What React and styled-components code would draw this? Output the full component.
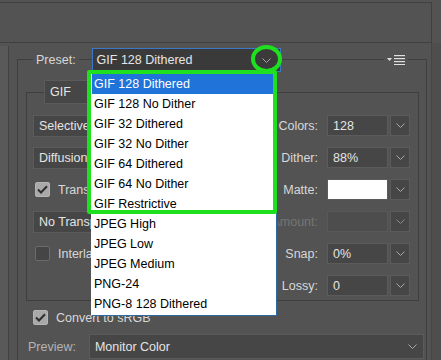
import React from "react";
import styled, { createGlobalStyle } from "styled-components";

const Global = createGlobalStyle`
  html, body { margin: 0; padding: 0; }
  body {
    width: 441px; height: 360px; overflow: hidden;
    background: #535353;
    font-family: "Liberation Sans", Arial, sans-serif;
    font-size: 12.5px;
    color: #dcdcdc;
  }
`;

const Page = styled.div`
  position: relative;
  width: 441px;
  height: 360px;
  overflow: hidden;
  background: #535353;
`;

const TopBox = styled.div`
  margin-top: 2px;
  margin-left: -1px;
  width: 431px;
  height: 39px;
  border: 1px solid #404040;
`;

const Main = styled.div`
  display: flex;
  height: 320px;
`;

const LeftStrip = styled.div`
  width: 8px;
  margin-top: 3px;
  background: #595959;
  border-right: 1px solid #424242;
`;

const RightStrip = styled.div`
  width: 9px;
  margin-left: 4px;
  border-left: 1px solid #454545;
  background: #4e4e4e;
`;

const Panel = styled.div`
  flex: 1;
  padding-left: 8px;
  padding-top: 16px;
`;

const Group = styled.div`
  border: 1px solid #3f3f3f;
  border-bottom: none;
  height: 320px;
`;

const Header = styled.div`
  display: flex;
  align-items: center;
  height: 24px;
  margin-top: -12px;
  padding-left: 15px;
  padding-right: 18px;
`;

const Label = styled.span`
  background: #535353;
  padding: 0 3px;
  color: ${(p) => (p.$dim ? "#b4b4b4" : "#d8d8d8")};
  white-space: nowrap;
`;

const PresetSelect = styled.div`
  margin-left: 13px;
  width: 183px;
  height: 22px;
  background: #3a3a3a;
  border: 1px solid #3b78c8;
  display: flex;
  align-items: center;
  padding-left: 4px;
  color: #e6e6e6;
`;

const Spacer = styled.div`flex: 1;`;

const MenuIcon = styled.div`
  background: #535353;
  padding: 0 3px;
  display: flex;
  align-items: center;
`;

const Inner = styled.div`
  margin: 20px 7px 0 8px;
  border: 1px solid #3f3f3f;
  padding: 0 8px 4px 6px;
`;

const InnerHeader = styled.div`
  margin-top: -13px;
  padding-left: 11px;
  display: flex;
`;

const Box = styled.div`
  height: ${(p) => p.$h || 22}px;
  width: ${(p) => p.$w}px;
  flex-shrink: 0;
  box-sizing: border-box;
  background: ${(p) => (p.$white ? "#ffffff" : p.$disabled ? "#4d4d4d" : "#464646")};
  border: 1px solid ${(p) => (p.$disabled ? "#585858" : "#5b5b5b")};
  display: flex;
  align-items: center;
  padding-left: 5px;
  color: #e4e4e4;
  white-space: nowrap;
  overflow: hidden;
`;

const Rows = styled.div`
  margin-top: 11px;
  display: flex;
  flex-direction: column;
  gap: 11px;
`;

const Row = styled.div`
  display: flex;
  align-items: center;
  height: 21px;
`;

/* left column ends where the open preset list begins */
const LeftCell = styled.div`
  width: 58px;
  height: 22px;
  display: flex;
  align-items: center;
  white-space: nowrap;
  overflow: hidden;
  color: #d8d8d8;
`;

const RightCell = styled.div`
  flex: 1;
  display: flex;
  align-items: center;
  justify-content: flex-end;
  gap: 2px;
`;

const RLabelClip = styled.div`
  width: ${(p) => p.$w || 40}px;
  margin-right: 7px;
  overflow: hidden;
  display: flex;
  justify-content: flex-end;
`;

const RLabel = styled.span`
  flex-shrink: 0;
  color: ${(p) => (p.$disabled ? "#757575" : "#d8d8d8")};
  white-space: nowrap;
`;

const ChevBox = styled.div`
  width: 20px;
  height: 21px;
  box-sizing: border-box;
  background: #464646;
  border: 1px solid #5b5b5b;
  display: flex;
  align-items: center;
  justify-content: center;
`;

const Check = styled.div`
  width: 15px;
  height: 15px;
  flex-shrink: 0;
  margin-left: 2px;
  box-sizing: border-box;
  border-radius: 2px;
  background: ${(p) => (p.$on ? "#a9a9a9" : "#454545")};
  border: 1px solid ${(p) => (p.$on ? "#b5b5b5" : "#6b6b6b")};
  display: flex;
  align-items: center;
  justify-content: center;
  margin-right: 8px;
`;

const CheckRow = styled.div`
  display: flex;
  align-items: center;
  height: 17px;
  margin-top: 8px;
  padding-left: 13px;
  color: #d8d8d8;
`;

const PreviewRow = styled.div`
  display: flex;
  align-items: center;
  margin-top: 8px;
  padding-left: 7px;
  gap: 10px;
`;

const PreviewSelect = styled.div`
  width: 335px;
  height: 25px;
  box-sizing: border-box;
  background: #464646;
  border: 1px solid #5b5b5b;
  display: flex;
  align-items: center;
  padding: 0 6px 0 5px;
  color: #e4e4e4;
  justify-content: space-between;
`;

const List = styled.div`
  position: absolute;
  left: 91px;
  top: 72px;
  width: 186px;
  box-sizing: border-box;
  background: #ffffff;
  border: 1px solid #2c6aa0;
  border-left-color: #ffffff;
  padding: 1px 0;
`;

const Item = styled.div`
  height: 20px;
  line-height: 20px;
  padding-left: 2px;
  color: ${(p) => (p.$active ? "#ffffff" : "#000000")};
  background: ${(p) => (p.$active ? "#2073d8" : "transparent")};
  white-space: nowrap;
`;

const GreenRect = styled.div`
  position: absolute;
  left: 87px;
  top: 70px;
  width: 190px;
  height: 144px;
  box-sizing: border-box;
  border: 4px solid #1fe01f;
  border-radius: 2px;
`;

const GreenCircle = styled.div`
  position: absolute;
  left: 251px;
  top: 45px;
  width: 31px;
  height: 28px;
  box-sizing: border-box;
  border: 4px solid #1fe01f;
  border-radius: 50%;
  display: flex;
  align-items: center;
  justify-content: center;
  padding-top: 3px;
`;

const Chevron = ({ color = "#a8a8a8" }) => (
  <svg width="9" height="5" viewBox="0 0 9 5">
    <path d="M0.5 0.5 L4.5 4.5 L8.5 0.5" fill="none" stroke={color} strokeWidth="1" />
  </svg>
);

const Tick = () => (
  <svg width="11" height="9" viewBox="0 0 11 9">
    <path d="M1 4.5 L4 7.5 L10 1.2" fill="none" stroke="#2e2e2e" strokeWidth="2" />
  </svg>
);

const Menu = () => (
  <svg width="18" height="10" viewBox="0 0 18 10">
    <path d="M0 3 L5 3 L2.5 6 Z" fill="#e0e0e0" />
    <rect x="7" y="0" width="11" height="1.2" fill="#e0e0e0" />
    <rect x="7" y="3" width="11" height="1.2" fill="#e0e0e0" />
    <rect x="7" y="6" width="11" height="1.2" fill="#e0e0e0" />
    <rect x="7" y="9" width="11" height="1" fill="#e0e0e0" />
  </svg>
);

const presets = [
  "GIF 128 Dithered",
  "GIF 128 No Dither",
  "GIF 32 Dithered",
  "GIF 32 No Dither",
  "GIF 64 Dithered",
  "GIF 64 No Dither",
  "GIF Restrictive",
  "JPEG High",
  "JPEG Low",
  "JPEG Medium",
  "PNG-24",
  "PNG-8 128 Dithered",
];

const RightSel = ({ label, value, white, disabled, clip }) => (
  <RightCell>
    <RLabelClip $w={clip}><RLabel $disabled={disabled}>{label}</RLabel></RLabelClip>
    <Box $w={61} $h={21} $white={white} $disabled={disabled}>{value}</Box>
    <ChevBox><Chevron color={disabled ? "#8a8a8a" : "#a8a8a8"} /></ChevBox>
  </RightCell>
);

export default function App() {
  return (
    <Page>
      <Global />
      <TopBox />
      <Main>
        <LeftStrip />
        <Panel>
          <Group>
            <Header>
              <Label>Preset:</Label>
              <PresetSelect>GIF 128 Dithered</PresetSelect>
              <Spacer />
              <MenuIcon><Menu /></MenuIcon>
            </Header>
            <Inner>
              <InnerHeader>
                <Box $w={130} $h={24}>GIF</Box>
              </InnerHeader>
              <Rows>
                <Row>
                  <LeftCell><Box $w={220}>Selective</Box></LeftCell>
                  <RightSel label="Colors:" value="128" />
                </Row>
                <Row>
                  <LeftCell><Box $w={220}>Diffusion</Box></LeftCell>
                  <RightSel label="Dither:" value="88%" />
                </Row>
                <Row>
                  <LeftCell><Check $on><Tick /></Check>Transparency</LeftCell>
                  <RightSel label="Matte:" value="" white />
                </Row>
                <Row>
                  <LeftCell><Box $w={220}>No Transparency Dither</Box></LeftCell>
                  <RightSel label="Amount:" value="" disabled />
                </Row>
                <Row>
                  <LeftCell><Check />Interlaced</LeftCell>
                  <RightSel label="Web Snap:" value="0%" clip={35} />
                </Row>
                <Row>
                  <LeftCell />
                  <RightSel label="Lossy:" value="0" />
                </Row>
              </Rows>
            </Inner>
            <CheckRow><Check $on><Tick /></Check>Convert to sRGB</CheckRow>
            <PreviewRow>
              <Label $dim>Preview:</Label>
              <PreviewSelect>Monitor Color<Chevron /></PreviewSelect>
            </PreviewRow>
          </Group>
        </Panel>
        <RightStrip />
      </Main>
      <List>
        {presets.map((p, i) => (
          <Item key={p} $active={i === 0}>{p}</Item>
        ))}
      </List>
      <GreenRect />
      <GreenCircle><Chevron /></GreenCircle>
    </Page>
  );
}
